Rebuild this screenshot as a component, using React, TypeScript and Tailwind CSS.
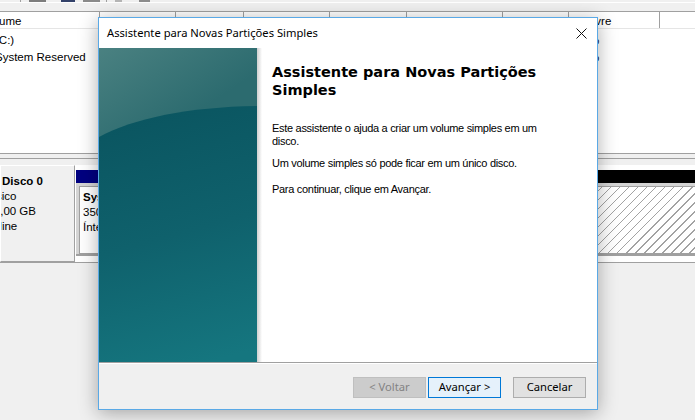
import { useId } from 'react'

let colWidths = [
  'w-[100px]',
  'w-[76px]',
  'w-[68px]',
  'w-[86px]',
  'w-[77px]',
  'w-[96px]',
  'w-[66px]',
  'w-[91px]',
  'w-[60px]',
]

let headers = [
  'Volume',
  'Layout',
  'Tipo',
  'Sistema de Arquivos',
  'Status',
  'Capacidade',
  'Espaço Livre',
  '% Livre',
  '',
]

let rows = [
  ['(C:)', 'Simples', 'Básico', 'NTFS', 'Íntegro (I...', '59,66 GB', '41,92 GB', '70 %', ''],
  ['System Reserved', 'Simples', 'Básico', 'NTFS', 'Íntegro (S...', '350 MB', '317 MB', '91 %', ''],
]

let Toolbar = () => (
  <div className="h-[11px]">
    <div className="flex h-[3px] border-b border-white">
      <div className="ml-[20px] w-px bg-[#a0a0a0]" />
      <div className="ml-[8px] w-[17px] bg-[#7d7d7d]" />
      <div className="ml-[15px] w-[14px] bg-[#34426a]" />
      <div className="ml-[8px] w-[17px] bg-[#8a8a8a]" />
      <div className="ml-[6px] w-px bg-[#a0a0a0]" />
      <div className="ml-[8px] w-[7px] bg-[#b5b5b5]" />
      <div className="ml-[17px] w-[11px] bg-[#8d8d8d]" />
    </div>
  </div>
)

let VolumeList = () => (
  <div className="border-t border-b border-[#a0a0a0] bg-white">
    <div className="flex h-[17px] border-b border-[#e5e5e5]">
      {headers.map((h, i) => (
        <div
          key={i}
          className={`${colWidths[i]} shrink-0 overflow-hidden whitespace-nowrap border-r border-[#a0a0a0] leading-[19px] ${
            i == 0 ? '' : 'pl-[4px]'
          }`}
        >
          <span className={i == 0 ? 'ml-[-17px]' : ''}>{h}</span>
        </div>
      ))}
    </div>
    <div className="h-[124px] pt-[3px]">
      {rows.map((r, ri) => (
        <div key={ri} className="flex h-[17px] leading-[17px]">
          {r.map((c, i) => (
            <div
              key={i}
              className={`${colWidths[i]} shrink-0 overflow-hidden whitespace-nowrap ${
                i == 0 ? '' : 'pl-[4px]'
              }`}
            >
              <span className={i == 0 ? 'ml-[-5px]' : ''}>{c}</span>
            </div>
          ))}
        </div>
      ))}
    </div>
  </div>
)

let Partition = (props: {
  width: string
  bar: string
  hatched?: boolean
  lines: string[]
}) => {
  let { width, bar, hatched, lines } = props
  return (
    <div className={`${width} mr-[1px] flex shrink-0 flex-col`}>
      <div className={`h-[13px] ${bar}`} />
      <div className="bg-[#d4d4d4] px-[3px] pt-[3px]">
        <div
          className={`h-[68px] overflow-hidden whitespace-nowrap border border-[#a0a0a0] pl-[3px] pt-[3px] leading-[15px] ${
            hatched
              ? 'bg-white bg-[repeating-linear-gradient(135deg,transparent_0_5.4px,#a3a3a3_5.4px_6.4px)]'
              : 'bg-white'
          }`}
        >
          {lines.map((l, i) => (
            <div key={i} className={i == 0 ? 'font-bold' : ''}>
              {l}
            </div>
          ))}
        </div>
      </div>
      <div className="h-[2px] bg-[#a0a0a0]" />
    </div>
  )
}

let DiskView = () => (
  <div className="mt-[4px] border-t border-[#a0a0a0]">
    <div className="mt-[6px] flex h-[98px] border-b border-[#a0a0a0]">
      <div className="w-[75px] shrink-0 overflow-hidden whitespace-nowrap border border-t-white border-l-white border-r-[#a0a0a0] border-b-[#a0a0a0] pl-[1px] pt-[8px] leading-[15px]">
        <div className="font-bold">Disco 0</div>
        <div className="ml-[-20px]">Básico</div>
        <div className="ml-[-21px]">127,00 GB</div>
        <div className="ml-[-18px]">Online</div>
      </div>
      <div className="flex flex-1 overflow-hidden bg-white pl-[1px] pt-[5px]">
        <Partition
          width="w-[90px]"
          bar="bg-[#000080]"
          lines={['System Reserved', '350 MB NTFS', 'Íntegro (Sistema, Ativo, Partição Primária)']}
        />
        <Partition
          width="w-[340px]"
          bar="bg-[#000080]"
          lines={['(C:)', '59,66 GB NTFS', 'Íntegro (Inicialização, Arquivo de Paginação)']}
        />
        <Partition width="w-[200px]" bar="bg-black" hatched lines={['', '67,00 GB', 'Não alocado']} />
      </div>
    </div>
  </div>
)

let SidePanel = () => {
  let id = useId().replace(/:/g, '')
  return (
    <svg width="158" height="314" viewBox="0 0 158 314" className="block shrink-0">
      <defs>
        <linearGradient id={`${id}t`} gradientUnits="userSpaceOnUse" x1="0" y1="0" x2="60" y2="90">
          <stop offset="0" stopColor="#4a8181" />
          <stop offset="1" stopColor="#2c6b6f" />
        </linearGradient>
        <linearGradient id={`${id}b`} gradientUnits="userSpaceOnUse" x1="40" y1="60" x2="110" y2="314">
          <stop offset="0" stopColor="#0a5560" />
          <stop offset="0.5" stopColor="#0f616c" />
          <stop offset="1" stopColor="#15767f" />
        </linearGradient>
      </defs>
      <rect width="158" height="314" fill={`url(#${id}t)`} />
      <path d="M0 89 C35 70 90 59 158 58 L158 314 L0 314 Z" fill={`url(#${id}b)`} />
    </svg>
  )
}

let WizardDialog = () => (
  <div className="absolute left-[98px] top-[17px] flex h-[393px] w-[500px] flex-col border border-[#5aa9e6] bg-white shadow-[0_3px_18px_rgba(0,0,0,0.32)]">
    <div className="flex h-[30px] shrink-0 items-center pl-[8px] font-['Noto_Sans',sans-serif] text-[11.2px]">
      <span>Assistente para Novas Partições Simples</span>
      <svg width="11" height="11" viewBox="0 0 11 11" className="ml-auto mr-[10px]">
        <path d="M0.5 0.5 L10.5 10.5 M10.5 0.5 L0.5 10.5" stroke="#111" strokeWidth="1" />
      </svg>
    </div>
    <div className="flex h-[314px] shrink-0">
      <SidePanel />
      <div className="w-[5px] shrink-0 bg-gradient-to-r from-[#cfcfcf] to-white" />
      <div className="w-[290px] pl-[10px] pt-[15px]">
        <div className="font-['DejaVu_Sans',sans-serif] text-[14.5px] font-bold leading-[18px]">
          Assistente para Novas Partições Simples
        </div>
        <div className="mt-[23px] text-[11px] leading-[13px] tracking-[-0.3px]">
          Este assistente o ajuda a criar um volume simples em um disco.
        </div>
        <div className="mt-[9px] text-[11px] leading-[13px] tracking-[-0.3px]">
          Um volume simples só pode ficar em um único disco.
        </div>
        <div className="mt-[13px] text-[11px] leading-[13px] tracking-[-0.3px]">
          Para continuar, clique em Avançar.
        </div>
      </div>
    </div>
    <div className="h-[2px] shrink-0 border-t border-[#a0a0a0] bg-white" />
    <div className="flex flex-1 items-start justify-end bg-[#f0f0f0] pr-[11px] pt-[13px] font-['Noto_Sans',sans-serif] text-[11.2px]">
      <button className="flex h-[21px] w-[73px] items-center justify-center border border-[#bfbfbf] bg-[#cccccc] text-[#838383]">
        &lt; Voltar
      </button>
      <button className="ml-[2px] flex h-[21px] w-[73px] items-center justify-center border border-[#0078d7] bg-[#e5f1fb]">
        Avançar &gt;
      </button>
      <button className="ml-[12px] flex h-[21px] w-[73px] items-center justify-center border border-[#adadad] bg-[#e1e1e1]">
        Cancelar
      </button>
    </div>
  </div>
)

export default function App() {
  return (
    <div className="relative h-[420px] w-[695px] overflow-hidden bg-[#f0f0f0] font-['Liberation_Sans',Arial,sans-serif] text-[11.5px] text-black">
      <Toolbar />
      <VolumeList />
      <DiskView />
      <WizardDialog />
    </div>
  )
}
